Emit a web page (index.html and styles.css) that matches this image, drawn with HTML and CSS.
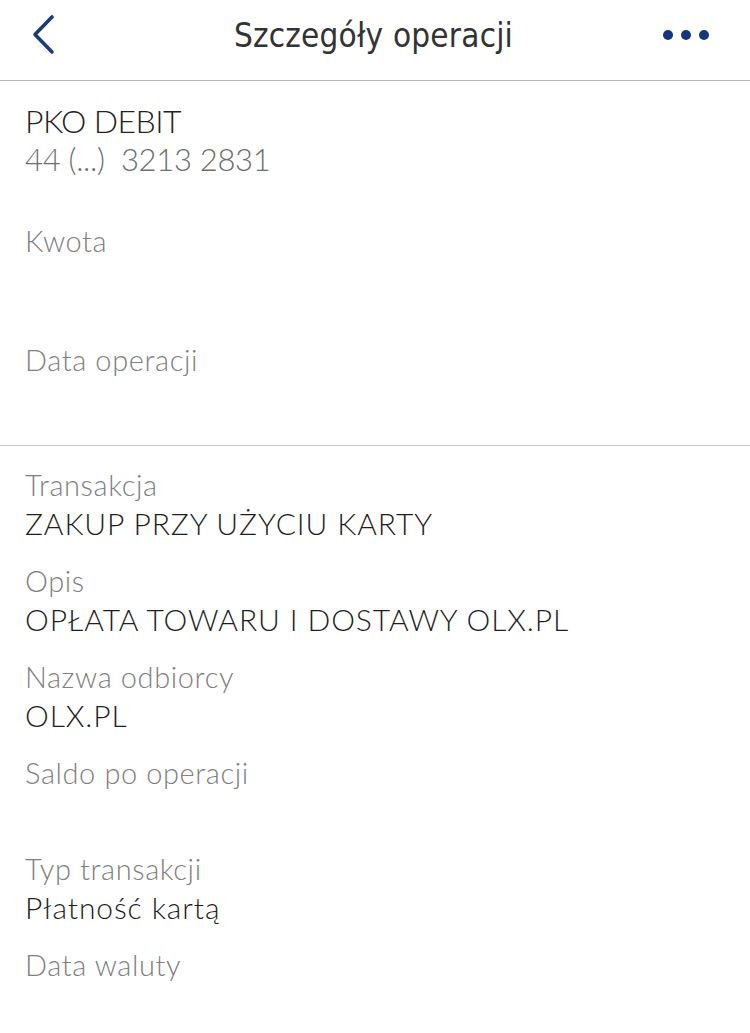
FILE: index.html
```html
<!DOCTYPE html>
<html lang="pl">
<head>
<meta charset="utf-8">
<title>Szczegóły operacji</title>
<link rel="stylesheet" href="styles.css">
</head>
<body>
<header class="topbar">
  <button class="icon-btn back" aria-label="Wstecz">
    <svg width="24" height="42" viewBox="0 0 24 42"><path d="M21 3 L4 20.5 L21 38" fill="none" stroke="#1a3a78" stroke-width="3.6" stroke-linecap="round" stroke-linejoin="round"/></svg>
  </button>
  <h1 class="title">Szczegóły operacji</h1>
  <button class="icon-btn more" aria-label="Więcej">
    <span class="dot"></span><span class="dot"></span><span class="dot"></span>
  </button>
</header>

<section class="account">
  <div class="acc-name">PKO DEBIT</div>
  <div class="acc-number">44 (...)&nbsp; 3213 2831</div>
  <div class="field field-amount">
    <div class="label">Kwota</div>
    <div class="value amount"></div>
  </div>
  <div class="field">
    <div class="label">Data operacji</div>
    <div class="value"></div>
  </div>
</section>

<section class="details">
  <div class="field">
    <div class="label">Transakcja</div>
    <div class="value">ZAKUP PRZY UŻYCIU KARTY</div>
  </div>
  <div class="field">
    <div class="label">Opis</div>
    <div class="value">OPŁATA TOWARU I DOSTAWY OLX.PL</div>
  </div>
  <div class="field">
    <div class="label">Nazwa odbiorcy</div>
    <div class="value">OLX.PL</div>
  </div>
  <div class="field">
    <div class="label">Saldo po operacji</div>
    <div class="value"></div>
  </div>
  <div class="field">
    <div class="label">Typ transakcji</div>
    <div class="value">Płatność kartą</div>
  </div>
  <div class="field">
    <div class="label">Data waluty</div>
    <div class="value"></div>
  </div>
</section>
</body>
</html>
```
FILE: styles.css
```css
* { box-sizing: border-box; }
html, body { margin: 0; padding: 0; background: #fff; }
body {
  font-family: Lato, "Noto Sans", sans-serif;
  font-weight: 300;
  color: #222;
  width: 750px;
  overflow: hidden;
}
.topbar {
  height: 81px;
  display: flex;
  align-items: center;
  justify-content: space-between;
  border-bottom: 1px solid #b8b8b8;
  padding: 0 41px 10px 31px;
}
.icon-btn {
  border: 0;
  background: none;
  padding: 0;
  display: flex;
  align-items: center;
  cursor: pointer;
}
.back { width: 51px; }
.title {
  margin: 0;
  font-family: "Liberation Sans Narrow", "DejaVu Sans Condensed", sans-serif;
  font-weight: 400;
  font-size: 33px;
  color: #333;
  letter-spacing: 0.2px;
  flex: 1;
  text-align: center;
  padding-left: 16px;
}
.more { width: 60px; justify-content: flex-end; gap: 7.5px; }
.dot {
  width: 10.5px; height: 10.5px;
  border-radius: 50%;
  background: #163679;
  display: block;
}
.account {
  padding: 21px 25px 28px;
  border-bottom: 1px solid #c4c4c4;
}
.acc-name {
  font-size: 32px;
  line-height: 38px;
  letter-spacing: -0.6px;
  color: #222;
}
.acc-number {
  font-size: 31px;
  line-height: 38px;
  letter-spacing: -0.3px;
  color: #6e6e6e;
  margin-bottom: 44px;
}
.details { padding: 20px 25px 0; }
.field { margin-bottom: 20px; }
.field:last-child { margin-bottom: 0; }
.label {
  font-size: 29px;
  line-height: 38px;
  letter-spacing: 0.6px;
  color: #808080;
}
.value {
  font-size: 30px;
  line-height: 38px;
  min-height: 38px;
  letter-spacing: 0.9px;
  color: #1e1e1e;
}
.value.amount { min-height: 61px; }
```
